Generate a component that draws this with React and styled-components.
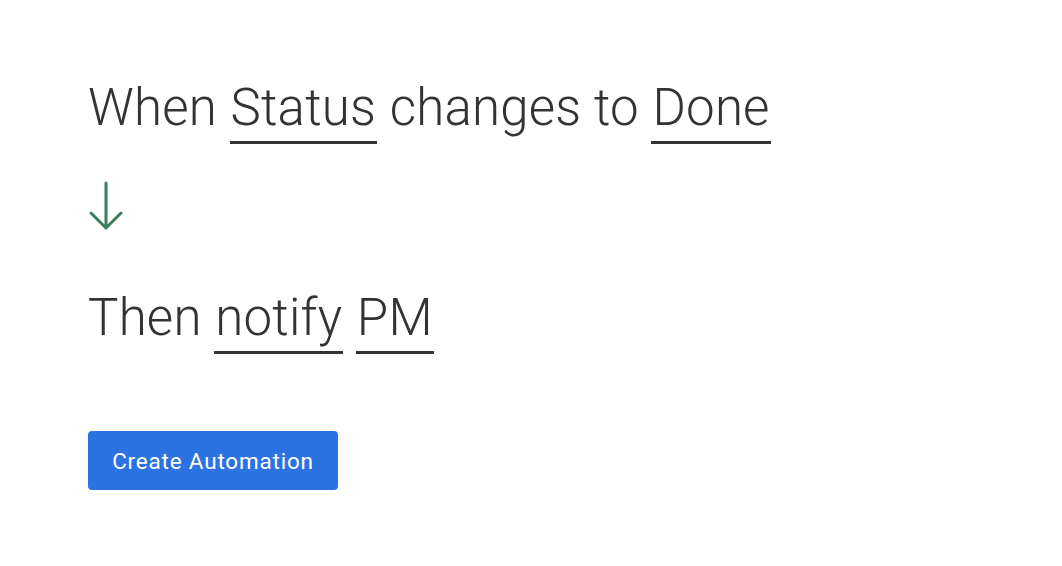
import React from "react";
import styled, { createGlobalStyle } from "styled-components";

const Global = createGlobalStyle`
  html, body { margin: 0; padding: 0; background: #ffffff; }
  body { font-family: Roboto, "Liberation Sans", sans-serif; }
`;

const Page = styled.div`
  width: 1062px;
  height: 566px;
  box-sizing: border-box;
  padding: 78px 0 0 88px;
  display: flex;
  flex-direction: column;
  align-items: flex-start;
`;

const Sentence = styled.div`
  font-family: Roboto, "Liberation Sans", sans-serif;
  font-weight: 300;
  font-size: 51px;
  line-height: 60px;
  letter-spacing: 0.2px;
  color: #333333;
  white-space: nowrap;
`;

const Token = styled.span`
  display: inline-block;
  line-height: 54px;
  padding: 0 ${(p) => p.$pad || 0}px 6px;
  border-bottom: 3px solid #333333;
`;

const ArrowWrap = styled.div`
  margin-top: 37px;
  width: 36px;
  height: 50px;
  display: flex;
`;

const Then = styled(Sentence)`
  margin-top: 57px;
`;

const Button = styled.button`
  margin-top: 77px;
  width: 250px;
  height: 59px;
  padding: 0;
  border: none;
  border-radius: 4px;
  background: #2b73e1;
  color: #ffffff;
  font-family: Roboto, "Liberation Sans", sans-serif;
  font-size: 22.5px;
  letter-spacing: 0.8px;
  font-weight: 400;
  cursor: pointer;
`;

export default function App() {
  return (
    <>
      <Global />
      <Page>
        <Sentence>
          When <Token $pad={1}>Status</Token> changes to <Token $pad={1}>Done</Token>
        </Sentence>
        <ArrowWrap>
          <svg width="36" height="50" viewBox="0 0 36 50" fill="none">
            <path d="M18 2 V47 M3 32 L18 47 L33 32" stroke="#3b7d5c" strokeWidth="3" strokeLinecap="round" strokeLinejoin="round" />
          </svg>
        </ArrowWrap>
        <Then>
          Then <Token $pad={1}>notify</Token> <Token $pad={1}>PM</Token>
        </Then>
        <Button>Create Automation</Button>
      </Page>
    </>
  );
}
